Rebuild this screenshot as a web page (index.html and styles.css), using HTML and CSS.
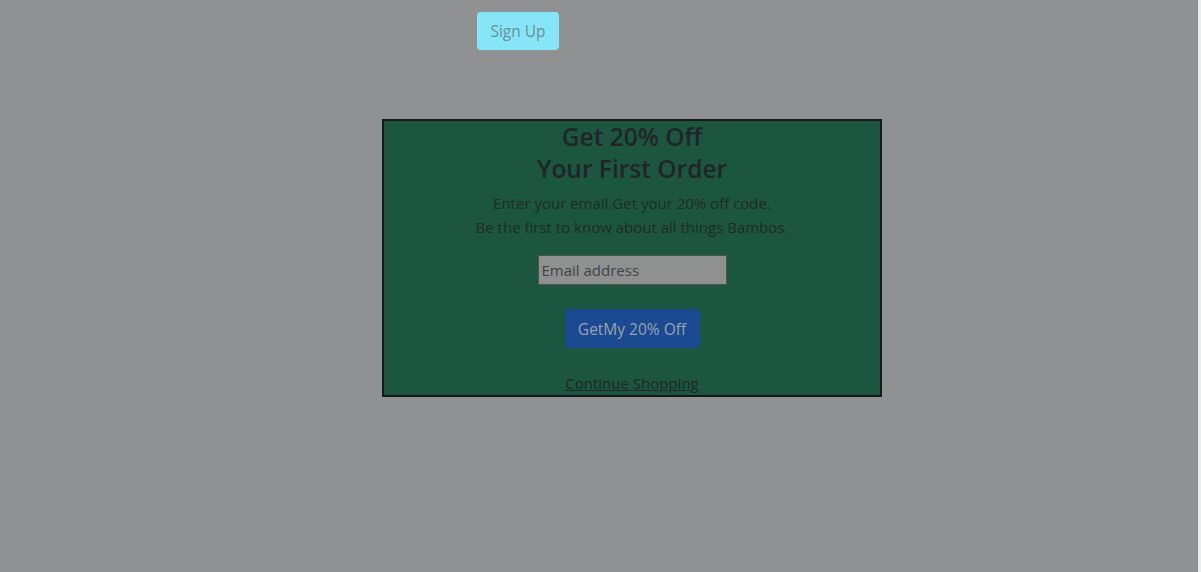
FILE: index.html
```html
<!DOCTYPE html>
<html lang="en">
<head>
<meta charset="utf-8">
<title>Sign Up</title>
<link rel="stylesheet" href="styles.css">
</head>
<body>
<div class="page">
  <div class="top">
    <button class="signup" type="button">Sign Up</button>
  </div>
  <div class="modal">
    <h2 class="title">Get 20% Off<br>Your First Order</h2>
    <p class="lead">Enter your email.Get your 20% off code.<br>Be the first to know about all things Bambos.</p>
    <input class="email" type="email" placeholder="Email address">
    <button class="cta" type="button">GetMy 20% Off</button>
    <a class="continue" href="#">Continue Shopping</a>
  </div>
</div>
<div class="edge"></div>
</body>
</html>
```

FILE: styles.css
```css
html, body {
  margin: 0;
  padding: 0;
  height: 100%;
}
body {
  background: #909193;
  font-family: "Open Sans", "Noto Sans", sans-serif;
  font-size: 15px;
  color: #212529;
  overflow: hidden;
}
.page {
  padding-top: 12px;
}
.top {
  padding-left: 477px;
}
.signup {
  width: 82px;
  height: 38px;
  border: none;
  border-radius: 4px;
  background: #86e5f6;
  color: #6b8e96;
  font-family: inherit;
  font-size: 15.5px;
  padding: 0;
}
.modal {
  margin: 69px 0 0 382px;
  width: 496px;
  height: 274px;
  border: 2px solid #151a18;
  background: #1c5640;
  display: flex;
  flex-direction: column;
  align-items: center;
  text-align: center;
}
.title {
  margin: 0;
  font-size: 24.5px;
  font-weight: 600;
  line-height: 32px;
  color: #212528;
}
.lead {
  margin: 6px 0 0;
  line-height: 24px;
  color: #1f2a27;
}
.email {
  margin-top: 16px;
  box-sizing: border-box;
  width: 189px;
  height: 30px;
  background: #8f9090;
  border: 1px solid #4f5352;
  padding: 0 3px;
  font-family: inherit;
  font-size: 15px;
  color: #3f4343;
}
.email::placeholder {
  color: #404545;
}
.cta {
  margin-top: 24px;
  width: 135px;
  height: 39px;
  border: none;
  border-radius: 4px;
  background: #1b4a92;
  color: #9aa2ae;
  font-family: inherit;
  font-size: 15.5px;
  padding: 0;
}
.continue {
  margin-top: 23px;
  line-height: 24px;
  color: #212528;
  text-decoration: underline;
}
.edge {
  position: fixed;
  top: 0;
  right: 0;
  width: 3px;
  height: 100%;
  background: #eceded;
}
```
